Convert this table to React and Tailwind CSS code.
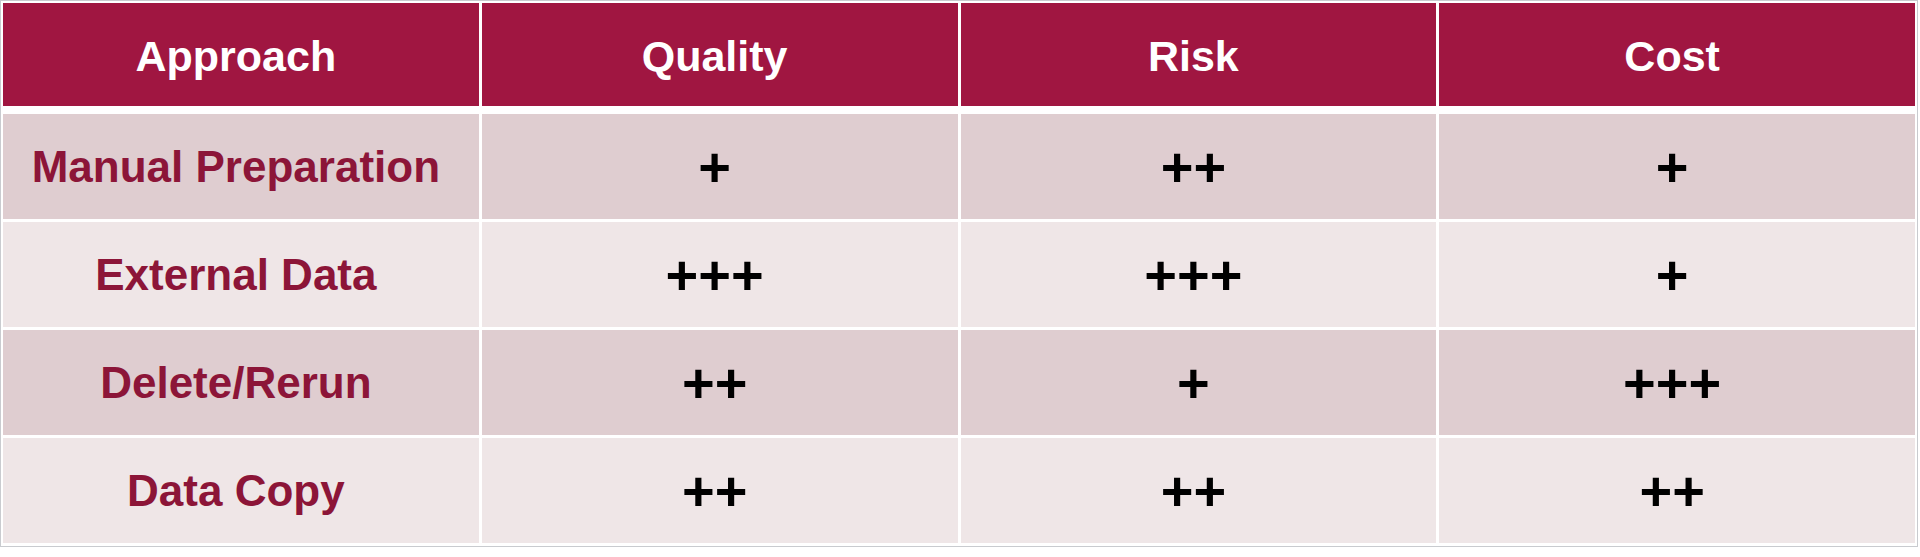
const COLUMNS = ['Approach', 'Quality', 'Risk', 'Cost'];

const ROWS = [
  { name: 'Manual Preparation', values: ['+', '++', '+'], shade: 'dark' },
  { name: 'External Data', values: ['+++', '+++', '+'], shade: 'light' },
  { name: 'Delete/Rerun', values: ['++', '+', '+++'], shade: 'dark' },
  { name: 'Data Copy', values: ['++', '++', '++'], shade: 'light' },
];

const CELL = 'flex items-center justify-center pr-[10px] h-[105px]';

function rowBg(shade) {
  if (shade === 'dark') return 'bg-[#dfcdd0]';
  return 'bg-[#efe6e7]';
}

export default function App() {
  return (
    <div className="w-[1920px] h-[557px] bg-white font-['Liberation_Sans',Arial,sans-serif]">
      <div className="w-[1918px] h-[547px] border border-[#c9cbcf] p-[2px]">
        <div className="grid grid-cols-4 gap-x-[3px]">
          {COLUMNS.map((col) => (
            <div
              key={col}
              className="flex items-center justify-center pr-[10px] pt-[4px] h-[103px] bg-[#a01641] text-white font-bold text-[43px] leading-none"
            >
              {col}
            </div>
          ))}
        </div>
        <div className="flex flex-col gap-y-[3px] mt-[8px]">
          {ROWS.map((row) => (
            <div key={row.name} className="grid grid-cols-4 gap-x-[3px]">
              <div
                className={`${CELL} ${rowBg(row.shade)} text-[#8c1538] font-bold text-[44px] leading-none`}
              >
                {row.name}
              </div>
              {row.values.map((v, i) => (
                <div
                  key={i}
                  className={`${CELL} ${rowBg(row.shade)} text-black font-bold text-[56px] leading-none`}
                >
                  {v}
                </div>
              ))}
            </div>
          ))}
        </div>
      </div>
    </div>
  );
}
